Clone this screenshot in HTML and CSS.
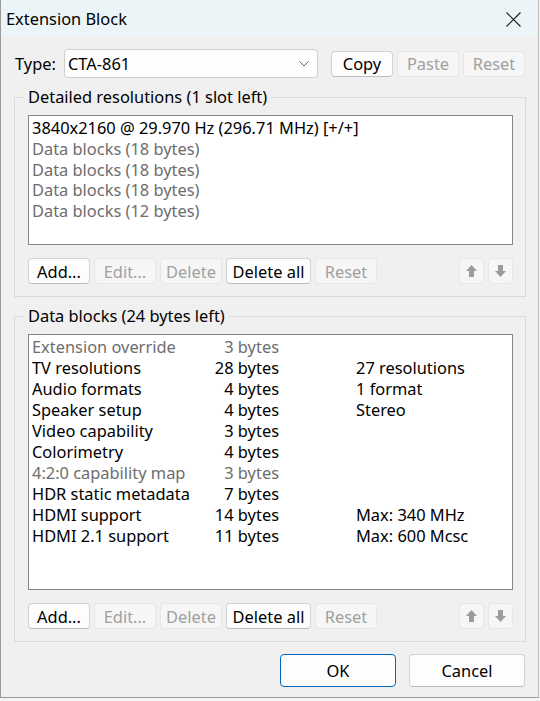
FILE: index.html
```html
<!DOCTYPE html>
<html lang="en">
<head>
    <meta charset="UTF-8">
    <title>Extension Block</title>
    <link rel="stylesheet" href="styles.css">
</head>
<body>
    <div class="dialog">
        <div class="titlebar">
            <span class="title">Extension Block</span>
            <button class="close-btn" aria-label="Close">
                <svg width="15" height="15" viewBox="0 0 15 15"><path d="M0.5 0.5 L14.5 14.5 M14.5 0.5 L0.5 14.5" stroke="#1b1b1b" stroke-width="1.1" fill="none"/></svg>
            </button>
        </div>

        <div class="content">
            <div class="type-row">
                <label class="type-label">Type:</label>
                <div class="combo">
                    <span>CTA-861</span>
                    <svg width="10" height="6" viewBox="0 0 10 6"><polyline points="0.5,0.5 5,5 9.5,0.5" stroke="#606060" stroke-width="1" fill="none"/></svg>
                </div>
                <div class="btn-row top-btns">
                    <button class="btn">Copy</button>
                    <button class="btn" disabled>Paste</button>
                    <button class="btn" disabled>Reset</button>
                </div>
            </div>

            <fieldset class="group">
                <legend>Detailed resolutions (1 slot left)</legend>
                <div class="listbox res-list">
                    <div class="item">3840x2160 @ 29.970 Hz (296.71 MHz) [+/+]</div>
                    <div class="item dim">Data blocks (18 bytes)</div>
                    <div class="item dim">Data blocks (18 bytes)</div>
                    <div class="item dim">Data blocks (18 bytes)</div>
                    <div class="item dim">Data blocks (12 bytes)</div>
                </div>
                <div class="btn-row">
                    <button class="btn">Add...</button>
                    <button class="btn" disabled>Edit...</button>
                    <button class="btn" disabled>Delete</button>
                    <button class="btn wide">Delete all</button>
                    <button class="btn" disabled>Reset</button>
                    <button class="btn arrow push" disabled>
                        <svg width="11" height="12" viewBox="0 0 11 12"><path d="M5.5 0 L11 6 H8 V12 H3 V6 H0 Z" fill="#9c9c9c"/></svg>
                    </button>
                    <button class="btn arrow" disabled>
                        <svg width="11" height="12" viewBox="0 0 11 12"><path d="M5.5 12 L11 6 H8 V0 H3 V6 H0 Z" fill="#9c9c9c"/></svg>
                    </button>
                </div>
            </fieldset>

            <fieldset class="group">
                <legend>Data blocks (24 bytes left)</legend>
                <div class="listbox block-list">
                    <div class="row dim"><span>Extension override</span><span class="size">3 bytes</span><span class="info"></span></div>
                    <div class="row"><span>TV resolutions</span><span class="size">28 bytes</span><span class="info">27 resolutions</span></div>
                    <div class="row"><span>Audio formats</span><span class="size">4 bytes</span><span class="info">1 format</span></div>
                    <div class="row"><span>Speaker setup</span><span class="size">4 bytes</span><span class="info">Stereo</span></div>
                    <div class="row"><span>Video capability</span><span class="size">3 bytes</span><span class="info"></span></div>
                    <div class="row"><span>Colorimetry</span><span class="size">4 bytes</span><span class="info"></span></div>
                    <div class="row dim"><span>4:2:0 capability map</span><span class="size">3 bytes</span><span class="info"></span></div>
                    <div class="row"><span>HDR static metadata</span><span class="size">7 bytes</span><span class="info"></span></div>
                    <div class="row"><span>HDMI support</span><span class="size">14 bytes</span><span class="info">Max: 340 MHz</span></div>
                    <div class="row"><span>HDMI 2.1 support</span><span class="size">11 bytes</span><span class="info">Max: 600 Mcsc</span></div>
                </div>
                <div class="btn-row">
                    <button class="btn">Add...</button>
                    <button class="btn" disabled>Edit...</button>
                    <button class="btn" disabled>Delete</button>
                    <button class="btn wide">Delete all</button>
                    <button class="btn" disabled>Reset</button>
                    <button class="btn arrow push" disabled>
                        <svg width="11" height="12" viewBox="0 0 11 12"><path d="M5.5 0 L11 6 H8 V12 H3 V6 H0 Z" fill="#9c9c9c"/></svg>
                    </button>
                    <button class="btn arrow" disabled>
                        <svg width="11" height="12" viewBox="0 0 11 12"><path d="M5.5 12 L11 6 H8 V0 H3 V6 H0 Z" fill="#9c9c9c"/></svg>
                    </button>
                </div>
            </fieldset>

            <div class="dialog-buttons">
                <button class="btn big default">OK</button>
                <button class="btn big">Cancel</button>
            </div>
        </div>
    </div>
</body>
</html>
```

FILE: styles.css
```css
* {
    margin: 0;
    padding: 0;
    box-sizing: border-box;
}

body {
    font-family: "Noto Sans", "Open Sans", sans-serif;
    font-size: 16.4px;
    color: #000;
    background: #f4f4f4;
}

.dialog {
    width: 539px;
    height: 698px;
    background: #f0f0f0;
    border-left: 1px solid #9a9a9a;
    border-right: 1px solid #bcbcbc;
    border-bottom: 1px solid #9a9a9a;
}

.titlebar {
    height: 36px;
    background: #ebf5f8;
    display: flex;
    align-items: center;
    justify-content: space-between;
    padding: 2px 0 0 5px;
}

.title {
    line-height: 22px;
}

.close-btn {
    width: 45px;
    height: 34px;
    margin-right: 2px;
    border: none;
    background: transparent;
    display: flex;
    align-items: center;
    justify-content: center;
}

.content {
    padding: 13px 12px 0 13px;
}

.type-row {
    display: flex;
    align-items: center;
    height: 29px;
}

.type-label {
    width: 50px;
    padding-left: 1px;
}

.combo {
    width: 254px;
    height: 29px;
    background: #fefefe;
    border: 1px solid #cfcfcf;
    border-radius: 4px;
    display: flex;
    align-items: center;
    justify-content: space-between;
    padding: 0 8px 0 3px;
}

.group {
    border: 1px solid #dadada;
    padding: 8px 12px 12px 13px;
    margin-top: 9px;
    min-width: 0;
}

.group legend {
    line-height: 20px;
    padding: 0 4px;
    margin-left: -4px;
}

.listbox {
    background: #fff;
    border: 1px solid #868686;
    padding: 1px 3px;
}

.res-list {
    height: 130px;
    padding-top: 2px;
}

.block-list {
    height: 256px;
}

.item {
    line-height: 20.8px;
    white-space: nowrap;
}

.row {
    display: grid;
    grid-template-columns: 180px 67px 1fr;
    line-height: 21px;
    white-space: nowrap;
}

.row .size {
    text-align: right;
}

.row .info {
    padding-left: 77px;
}

.dim {
    color: #6d6d6d;
}

.btn-row {
    display: flex;
    gap: 4px;
    margin-top: 13px;
}

.top-btns {
    margin: 0 0 0 13px;
}

.btn {
    width: 62px;
    height: 26px;
    font: inherit;
    color: #000;
    background: #fdfdfd;
    border: 1px solid #d2d2d2;
    border-bottom-color: #bdbdbd;
    border-radius: 4px;
    display: flex;
    align-items: center;
    justify-content: center;
}

.btn:disabled {
    color: #a0a0a0;
    background: #f6f6f6;
    border-color: #e6e6e6;
}

.btn.wide {
    width: 85px;
}

.btn.arrow {
    width: 25px;
}

.push {
    margin-left: auto;
}

.dialog-buttons {
    display: flex;
    justify-content: flex-end;
    gap: 13px;
    margin-top: 12px;
    padding-right: 1px;
}

.btn.big {
    width: 116px;
    height: 33px;
}

.btn.default {
    border: 1px solid #0067c0;
}
```
